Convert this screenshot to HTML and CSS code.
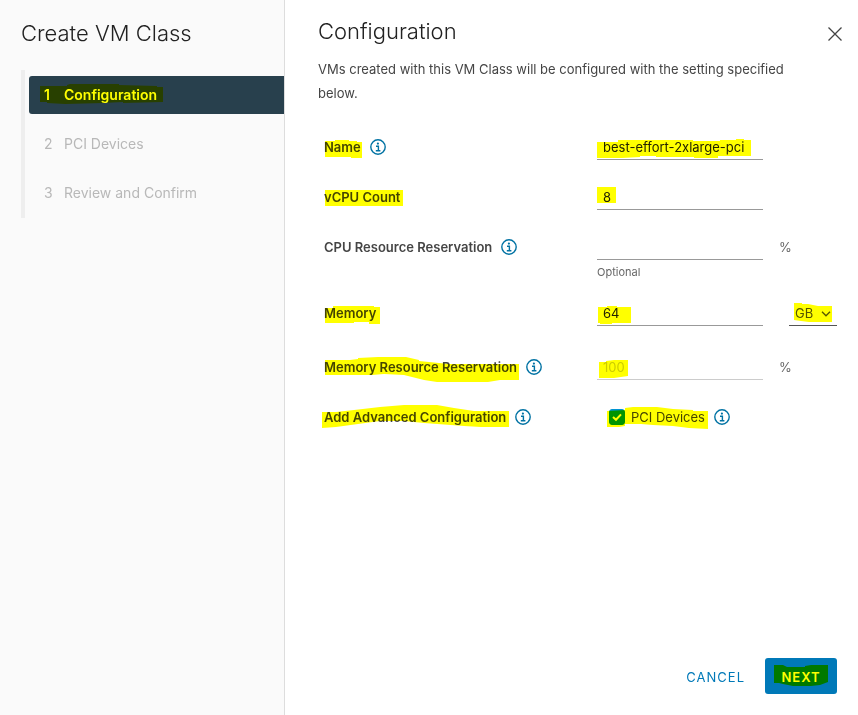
FILE: index.html
```html
<!DOCTYPE html>
<html lang="en">
<head>
<meta charset="UTF-8">
<meta name="viewport" content="width=device-width, initial-scale=1.0">
<title>Create VM Class</title>
<link rel="stylesheet" href="styles.css">
</head>
<body>

<!-- Shared icons -->
<svg class="sprite" aria-hidden="true">
  <symbol id="icon-info" viewBox="0 0 16 16">
    <circle cx="8" cy="8" r="7.2" fill="none" stroke="currentColor" stroke-width="1.4"/>
    <circle cx="7.9" cy="4.6" r="1.1" fill="currentColor"/>
    <path d="M6 7.2H8.4V11.6M5.8 11.7H10.4" fill="none" stroke="currentColor" stroke-width="1.4"/>
  </symbol>
</svg>

<div class="wizard">
  <aside class="sidebar">
    <h1 class="title">Create VM Class</h1>
    <ol class="steps">
      <li>
        <button type="button" class="step active marked">
          <span class="step-number">1</span>Configuration
          <svg class="marker" aria-hidden="true"><path d="M11 10H38V9L41 8H90V9L128 10V11H134V26L94 27V26L75 27L36 28L18 27V26H11Z"/></svg>
        </button>
      </li>
      <li><button type="button" class="step" disabled><span class="step-number">2</span>PCI Devices</button></li>
      <li><button type="button" class="step" disabled><span class="step-number">3</span>Review and Confirm</button></li>
    </ol>
  </aside>

  <main class="content">
    <header class="content-header">
      <h2 class="title">Configuration</h2>
      <button type="button" class="close" aria-label="Close">
        <svg width="14" height="14" viewBox="0 0 14 14"><path d="M0.5 0.5L13.5 13.5M13.5 0.5L0.5 13.5" fill="none" stroke="currentColor" stroke-width="1.3"/></svg>
      </button>
    </header>

    <p class="intro">VMs created with this VM Class will be configured with the setting specified below.</p>

    <form class="form" id="vm-form">
      <div class="row">
        <div class="label-cell">
          <label for="name" class="marked">Name<svg class="marker" aria-hidden="true"><path d="M1 5H11V4H25V5H33V6H38V22H27V21H1Z"/></svg></label>
          <button type="button" class="info" aria-label="About name"><svg><use href="#icon-info"/></svg></button>
        </div>
        <div class="field marked">
          <input type="text" id="name" value="best-effort-2xlarge-pci">
          <svg class="marker" aria-hidden="true"><path d="M0 6H21V4H96V5H123V4H139V3H147V4H154V20H121V22H97V21H59V20H43V21L25 22H0Z"/></svg>
        </div>
      </div>

      <div class="row">
        <div class="label-cell">
          <label for="vcpu" class="marked">vCPU Count<svg class="marker" aria-hidden="true"><path d="M1 4H79V20H1Z"/></svg></label>
        </div>
        <div class="field marked">
          <input type="text" id="vcpu" value="8">
          <svg class="marker" aria-hidden="true"><path d="M0 1H19V17H0Z"/></svg>
        </div>
      </div>

      <div class="row">
        <div class="label-cell">
          <label for="cpu-reservation">CPU Resource Reservation</label>
          <button type="button" class="info" aria-label="About CPU reservation"><svg><use href="#icon-info"/></svg></button>
        </div>
        <div class="field">
          <input type="text" id="cpu-reservation" aria-describedby="cpu-hint">
          <div class="hint" id="cpu-hint">Optional</div>
        </div>
        <span class="unit">%</span>
      </div>

      <div class="row row-memory">
        <div class="label-cell">
          <label for="memory" class="marked">Memory<svg class="marker" aria-hidden="true"><path d="M1 6H9V4H50V5H56V22H45V20H30V21H1Z"/></svg></label>
        </div>
        <div class="field marked">
          <input type="text" id="memory" value="64">
          <svg class="marker" aria-hidden="true"><path d="M1 5H10V4H20V5H34V21H15V22H3V21H1Z"/></svg>
        </div>
        <div class="select marked">
          <select id="memory-unit" aria-label="Memory unit">
            <option>MB</option>
            <option selected>GB</option>
            <option>TB</option>
          </select>
          <svg class="chevron" viewBox="0 0 10 6" aria-hidden="true"><path d="M1 0.8L5 4.8L9 0.8" fill="none" stroke="currentColor" stroke-width="1.3"/></svg>
          <svg class="marker" aria-hidden="true"><path d="M5 1H13V2H19L29 4H43V20H20L12 19L5 18Z"/></svg>
        </div>
      </div>

      <div class="row">
        <div class="label-cell">
          <label for="memory-reservation" class="marked">Memory Resource Reservation<svg class="marker" aria-hidden="true"><path d="M1 4H26L34 3V2L54 1H82L95 4V5L125 8H195V24H176L164 26H113L100 24L80 19L60 18L48 19H1Z"/></svg></label>
          <button type="button" class="info" aria-label="About memory reservation"><svg><use href="#icon-info"/></svg></button>
        </div>
        <div class="field marked">
          <input type="text" id="memory-reservation" value="100" disabled>
          <svg class="marker" aria-hidden="true"><path d="M2 6H9V5L17 4H31V20L17 22H2Z"/></svg>
        </div>
        <span class="unit">%</span>
      </div>

      <div class="row">
        <div class="label-cell">
          <span class="label marked">Add Advanced Configuration<svg class="marker" aria-hidden="true"><path d="M-2 6H12L30 4L56 1L80 -1H113L130 2L150 5H185V21H157L140 20L100 17L80 15H56L34 18L12 21L-2 22Z"/></svg></span>
          <button type="button" class="info" aria-label="About advanced configuration"><svg><use href="#icon-info"/></svg></button>
        </div>
        <div class="check-cell">
          <div class="check marked">
            <span class="check-box">
              <input type="checkbox" id="pci" checked>
              <svg class="tick" viewBox="0 0 16 16" aria-hidden="true"><path d="M4 8L7 10.8L12 5.4" fill="none" stroke="#fff" stroke-width="2"/></svg>
            </span>
            <label for="pci">PCI Devices</label>
            <svg class="marker" aria-hidden="true"><path d="M-2 5L16 4V2L24 1H48L64 3L84 4V5H99V23L80 22L64 20L44 19L32 18H16V20L10 21H-2Z"/></svg>
          </div>
          <button type="button" class="info" aria-label="About PCI devices"><svg><use href="#icon-info"/></svg></button>
        </div>
      </div>
    </form>

    <footer class="actions">
      <button type="button" class="btn btn-link">CANCEL</button>
      <button type="submit" form="vm-form" class="btn btn-primary marked">NEXT<svg class="marker" aria-hidden="true"><path d="M9 7H18L22 9H40V8L46 7H63V24L55 27L46 28H28L18 26L14 25H9Z"/></svg></button>
    </footer>
  </main>
</div>

</body>
</html>
```

FILE: styles.css
```css
* {
  box-sizing: border-box;
}

body {
  margin: 0;
  font-family: Inter, "Open Sans", sans-serif;
  font-size: 13px;
  line-height: 24px;
  color: #454545;
  background: #fff;
}

button,
input,
select {
  font: inherit;
  color: inherit;
  margin: 0;
  padding: 0;
  border: none;
  background: none;
}

.sprite {
  display: none;
}

.wizard {
  display: flex;
  min-height: 100vh;
}

.title {
  margin: 0;
  font-size: 22px;
  font-weight: 300;
  line-height: 28px;
  color: #222;
}

/* Highlighter strokes over the values to enter */
.marked {
  position: relative;
}

.marker {
  position: absolute;
  top: 0;
  left: 0;
  width: 100%;
  height: 100%;
  overflow: visible;
  fill: #ff0;
  mix-blend-mode: multiply;
  pointer-events: none;
}

/* Sidebar */
.sidebar {
  flex: 0 0 285px;
  padding: 19px 0 0 21px;
  background: #fafafa;
  border-right: 1px solid #ddd;
}

.steps {
  display: flex;
  flex-direction: column;
  gap: 11px;
  margin: 23px 0 0;
  padding: 6px 0 6px 4px;
  border-left: 4px solid #eee;
  list-style: none;
}

.step {
  display: flex;
  align-items: center;
  width: 100%;
  height: 38px;
  padding-left: 15px;
  border-radius: 3px 0 0 3px;
  font-size: 14px;
  text-align: left;
  color: #b8b8b8;
}

.step-number {
  width: 20px;
}

.step.active {
  background: #28404d;
  color: #fff;
  font-weight: 600;
}

/* Content */
.content {
  flex: 1;
  min-width: 0;
  display: flex;
  flex-direction: column;
}

.content-header {
  display: flex;
  align-items: center;
  justify-content: space-between;
  padding: 17px 16px 0 33px;
}

.close {
  display: flex;
  padding-top: 6px;
  color: #444;
}

.intro {
  margin: 12px 48px 0 33px;
}

.form {
  padding: 31px 21px 0 39px;
  line-height: 22px;
}

.row {
  display: grid;
  grid-template-columns: minmax(0, 273fr) minmax(0, 166fr) 74px;
  align-items: start;
  min-height: 50px;
}

.row-memory {
  min-height: 54px;
}

.label-cell,
.check-cell {
  display: flex;
  align-items: center;
  gap: 9px;
  white-space: nowrap;
}

.label-cell label,
.label {
  font-weight: 600;
}

.info {
  display: flex;
  color: #0072a3;
}

.info svg {
  width: 16px;
  height: 16px;
}

.field input {
  display: block;
  width: 100%;
  height: 24px;
  padding: 0 6px 2px;
  border-bottom: 1px solid #999;
  color: #222;
  outline: none;
}

.field input:disabled {
  border-bottom-color: #ccc;
  color: #ccc;
}

.hint {
  padding: 4px 0 22px;
  font-size: 11px;
  line-height: 16px;
  color: #666;
}

.unit {
  padding-left: 16px;
  color: #666;
}

.select {
  justify-self: end;
  width: 48px;
  color: #555;
}

.select select {
  display: block;
  appearance: none;
  width: 100%;
  height: 24px;
  padding: 0 0 2px 6px;
  border-bottom: 1px solid #555;
  border-radius: 0;
}

.chevron {
  position: absolute;
  top: 9px;
  right: 6px;
  width: 10px;
  height: 6px;
  pointer-events: none;
}

.check-cell {
  padding-left: 12px;
}

.check {
  display: flex;
  align-items: center;
  gap: 6px;
}

.check-box {
  position: relative;
  display: flex;
}

.check-box input {
  appearance: none;
  width: 16px;
  height: 16px;
  border: 1px solid #999;
  border-radius: 3px;
}

.check-box input:checked {
  border-color: #0094d2;
  background: #0094d2;
}

.tick {
  position: absolute;
  inset: 0;
  visibility: hidden;
}

.check-box input:checked + .tick {
  visibility: visible;
  pointer-events: none;
}

/* Footer buttons */
.actions {
  display: flex;
  justify-content: flex-end;
  gap: 4px;
  margin-top: auto;
  padding: 21px;
}

.btn {
  height: 36px;
  padding: 1px 16px 0;
  border-radius: 3px;
  font-size: 13px;
  letter-spacing: 1px;
}

.btn-link {
  color: #0079b8;
}

.btn-primary {
  min-width: 72px;
  background: #0079b8;
  color: #fff;
  font-weight: 600;
}
```
